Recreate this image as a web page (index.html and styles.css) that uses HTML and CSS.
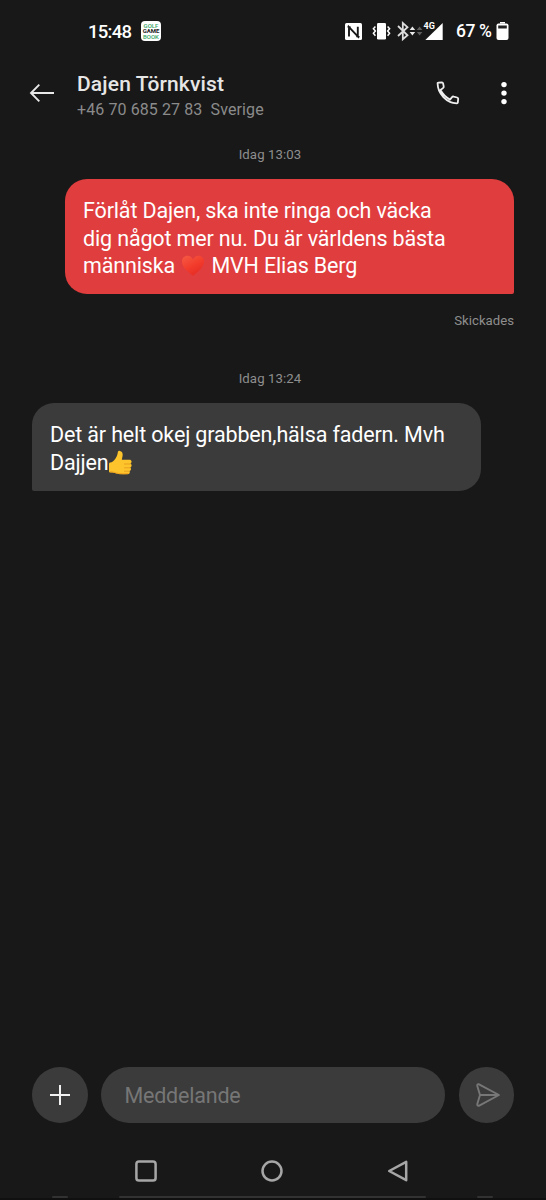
FILE: index.html
```html
<!DOCTYPE html>
<html lang="sv">
<head>
<meta charset="utf-8">
<title>Dajen Törnkvist</title>
<link rel="stylesheet" href="styles.css">
</head>
<body>
<div class="phone">
  <div class="status">
    <span class="clock">15:48</span>
    <div class="app-badge"><span class="green">GOLF</span><span>GAME</span><span class="green">BOOK</span></div>
    <svg class="status-icons" width="100" height="24" viewBox="344 19 100 24">
      <rect x="345" y="23" width="17" height="17" rx="1.5" fill="#fff"/>
      <path d="M349 36.6v-9.4l8.8 9.2v-9.6M347.6 26.4l3 1.2M356.4 36l3 1.2" fill="none" stroke="#181818" stroke-width="1.9"/>
      <rect x="377" y="23" width="9" height="16.5" rx="1.3" fill="#fff"/>
      <path d="M375.4 26.5l-2 2.2 2 2.2-2 2.3 2 2.5M387.6 26.5l2 2.2-2 2.2 2 2.3-2 2.5" fill="none" stroke="#fff" stroke-width="1.5"/>
      <path d="M398 26l9.5 9.3-4.7 4V23l4.7 4.2-9.5 8.8" fill="none" stroke="#dcdcdc" stroke-width="1.8"/>
      <path d="M409.6 30l2.8-3.4 2.8 3.4zM409.6 32l2.8 3.4 2.8-3.4z" fill="#e8e8e8"/>
      <path d="M416.8 30l2.8-3.4 2.8 3.4zM416.8 32l2.8 3.4 2.8-3.4z" fill="#5e5e5e"/>
      <path d="M442.7 23v17h-17.4z" fill="#fff"/>
      <text class="network" x="423.5" y="29.3">4G</text>
    </svg>
    <span class="percent">67 %</span>
    <svg class="battery" width="13" height="18" viewBox="0 0 13 18"><path d="M4 0h5v1.6H4z" fill="#fff"/><rect x=".5" y="1.5" width="12" height="16.5" rx="2" fill="#fff"/><path d="M2.2 3.5h8.6v3H2.2z" fill="#222"/></svg>
  </div>

  <header class="header">
    <svg class="back" width="26" height="20" viewBox="0 0 26 20" fill="none" stroke="#e8e8e8" stroke-width="1.9"><path d="M10.3 1.7L2 10l8.3 8.3M2 10h23"/></svg>
    <div class="contact">
      <div class="name">Dajen Törnkvist</div>
      <div class="number">+46 70 685 27 83&nbsp; Sverige</div>
    </div>
    <svg class="call" width="26" height="26" viewBox="435 80 26 26" fill="none" stroke="#eee" stroke-width="1.8" stroke-linejoin="round"><path d="M437.6 83.3q-.1-.7.6-.7l3.7-.2q1 0 1.2 1l.6 3q.2 1.1-.7 1.7l-2.5 1.9c2.4 4.5 5.2 7.2 9.5 9.6l2-2.4q.7-.9 1.7-.6l3.4.9q1.1.3 1.1 1.3l-.4 3.9q-.1.7-.9.7c-10.3-.4-19.3-9.8-19.3-20.1z"/></svg>
    <svg class="more" width="8" height="26" viewBox="0 0 8 26" fill="#fff"><circle cx="4" cy="4.6" r="2.7"/><circle cx="4" cy="13.1" r="2.7"/><circle cx="4" cy="21.6" r="2.7"/></svg>
  </header>

  <main class="thread">
    <div class="stamp">Idag 13:03</div>
    <div class="bubble sent">
      <div class="line">Förlåt Dajen, ska inte ringa och väcka</div>
      <div class="line">dig något mer nu. Du är världens bästa</div>
      <div class="line">människa <svg class="heart" width="26" height="23" viewBox="-1 0 26 22"><defs><linearGradient id="red" x1="0" y1="0" x2=".6" y2="1"><stop offset="0" stop-color="#f65b45"/><stop offset=".6" stop-color="#f23b2b"/><stop offset="1" stop-color="#e52d25"/></linearGradient></defs><path d="M12 21.3C8.5 18.2 1 13.5 1 6.9 1 3.4 3.5 1.2 6.4 1.2 9 1.2 11 2.7 12 5c1-2.3 3-3.8 5.6-3.8 2.9 0 5.4 2.2 5.4 5.7 0 6.6-7.5 11.3-11 14.4z" fill="url(#red)"/></svg> MVH Elias Berg</div>
    </div>
    <div class="receipt">Skickades</div>
    <div class="stamp second">Idag 13:24</div>
    <div class="bubble received">
      <div class="line">Det är helt okej grabben,hälsa fadern. Mvh</div>
      <div class="line">Dajjen<svg class="thumb" width="25" height="25" viewBox="0 0 25 25"><path d="M2 12.6c2.4-.5 4.1-1.8 5.5-4.2 1.4-2.1 2-3.9 2.3-6 .2-1.2 1-1.7 2-1.5 2.2.4 3.2 2.2 2.8 4.8l-.8 4.1h7.7c2.3 0 2.8 2.8 1 3.7 1.7 1 1.4 3.4-.2 3.9 1.3 1.1.8 3.1-.8 3.5.9 1.4 0 3.2-2 3.3-4 .3-8.5.1-11.3-.7-1.6-.5-3.3-.9-5.7-.9-1 0-1.5-.5-1.5-1.4v-7c0-.8.3-1.4 1-1.6z" fill="#fdc52b"/><path d="M16 14h6.5M16.2 17.8h6M16 21.2h5.4" fill="none" stroke="#e79b20" stroke-width=".9"/><path d="M2 21.7c4 .2 5.3 1.2 8.5 1.7 3 .5 7 .4 10 .1" fill="none" stroke="#ee9d1c" stroke-width=".9"/></svg></div>
    </div>
  </main>

  <footer class="composer">
    <div class="round"><svg width="22" height="22" viewBox="0 0 22 22"><path d="M11 1v20M1 11h20" stroke="#f2f2f2" stroke-width="2"/></svg></div>
    <div class="field">Meddelande</div>
    <div class="round send"><svg width="26" height="26" viewBox="0 0 26 26" fill="none" stroke="#777" stroke-width="1.9" stroke-linejoin="round"><path d="M3.6 2.2Q2 2 2.3 4L5 13 2.3 22q-.2 2 1.5 1.8L24 13zM5 13h19"/></svg></div>
  </footer>

  <nav class="nav">
    <svg width="22" height="22" viewBox="0 0 22 22"><rect x="1.4" y="1.4" width="19.2" height="19.2" rx="2.6"/></svg>
    <svg width="22" height="22" viewBox="0 0 22 22"><circle cx="11" cy="11" r="9.5"/></svg>
    <svg width="22" height="22" viewBox="0 0 22 22"><path d="M19.2 1.8v18.4L2.2 11z"/></svg>
  </nav>
  <div class="edge"><i class="dot"></i><i class="bar"></i><i class="dot"></i></div>
</div>
</body>
</html>
```
FILE: styles.css
```css
* { box-sizing: border-box; }
body { margin: 0; background: #181818; font-family: Roboto, sans-serif; color: #fff; }
.phone { width: 546px; height: 1200px; display: flex; flex-direction: column; overflow: hidden; white-space: nowrap; }
svg { display: block; flex: none; }

.status { height: 62px; display: flex; align-items: center; padding-left: 88px; }
.clock { width: 53px; padding-top: 1px; font-size: 18.5px; font-weight: 500; letter-spacing: -.75px; }
.app-badge { width: 20px; height: 20px; border-radius: 4px; background: #fff; color: #222; display: flex; flex-direction: column; align-items: center; justify-content: center; font-size: 6px; line-height: 5.6px; font-weight: 700; }
.green { color: #35a564; font-weight: 500; }
.status-icons { margin-left: 183px; }
.network { font-size: 9px; font-weight: 700; fill: #fff; stroke: #181818; stroke-width: 1.5px; paint-order: stroke; }
.percent { margin-left: 12px; width: 40px; font-size: 17.5px; font-weight: 500; letter-spacing: -.4px; }
.battery { margin-top: -1px; }

.header { height: 62px; display: flex; align-items: center; padding-left: 29px; }
.contact { margin-left: 22px; width: 358px; padding-top: 7px; }
.name { font-size: 21px; line-height: 26px; font-weight: 500; color: #e6e6e6; letter-spacing: .15px; }
.number { font-size: 16px; line-height: 26px; color: #8b8b8b; letter-spacing: .1px; }
.more { margin-left: 39px; }

.thread { flex: 1; padding: 21px 32px 0; display: flex; flex-direction: column; }
.stamp { font-size: 13.2px; line-height: 20px; color: #8e8e8e; text-align: center; letter-spacing: .1px; margin-right: 6px; }
.second { margin-top: 38px; }
.bubble { width: 449px; padding: 18px; font-size: 21.5px; letter-spacing: -.15px; }
.sent { height: 115px; margin-top: 14px; align-self: flex-end; background: #df3d3e; border-radius: 22px 22px 2px 22px; }
.received { height: 88px; margin-top: 14px; background: #3b3b3b; border-radius: 22px 22px 22px 2px; }
.line { height: 27.5px; line-height: 27.5px; display: flex; align-items: center; white-space: pre; }
.receipt { margin-top: 17px; font-size: 13.2px; line-height: 20px; color: #8e8e8e; text-align: right; }

.composer { display: flex; gap: 13.3px; padding-left: 32px; height: 56px; }
.round { width: 55.6px; height: 56px; border-radius: 50%; background: #3b3b3b; display: flex; align-items: center; justify-content: center; }
.field { width: 344.5px; border-radius: 28px; background: #3b3b3b; color: #767676; font-size: 21.5px; line-height: 58px; padding-left: 23.5px; letter-spacing: -.2px; }
.send { padding-left: 4px; }
.nav { margin-top: 37px; height: 22px; padding-left: 135px; display: flex; gap: 104px; fill: none; stroke: #a6a6a6; stroke-width: 2.5; stroke-linejoin: round; }
.edge { margin-top: 14px; height: 4px; padding-left: 52px; display: flex; gap: 51px; border-bottom: 2px solid #101010; }
.edge i { height: 2px; background: #323232; border-radius: 2px; }
.dot { width: 16px; }
.bar { width: 307px; }
```
